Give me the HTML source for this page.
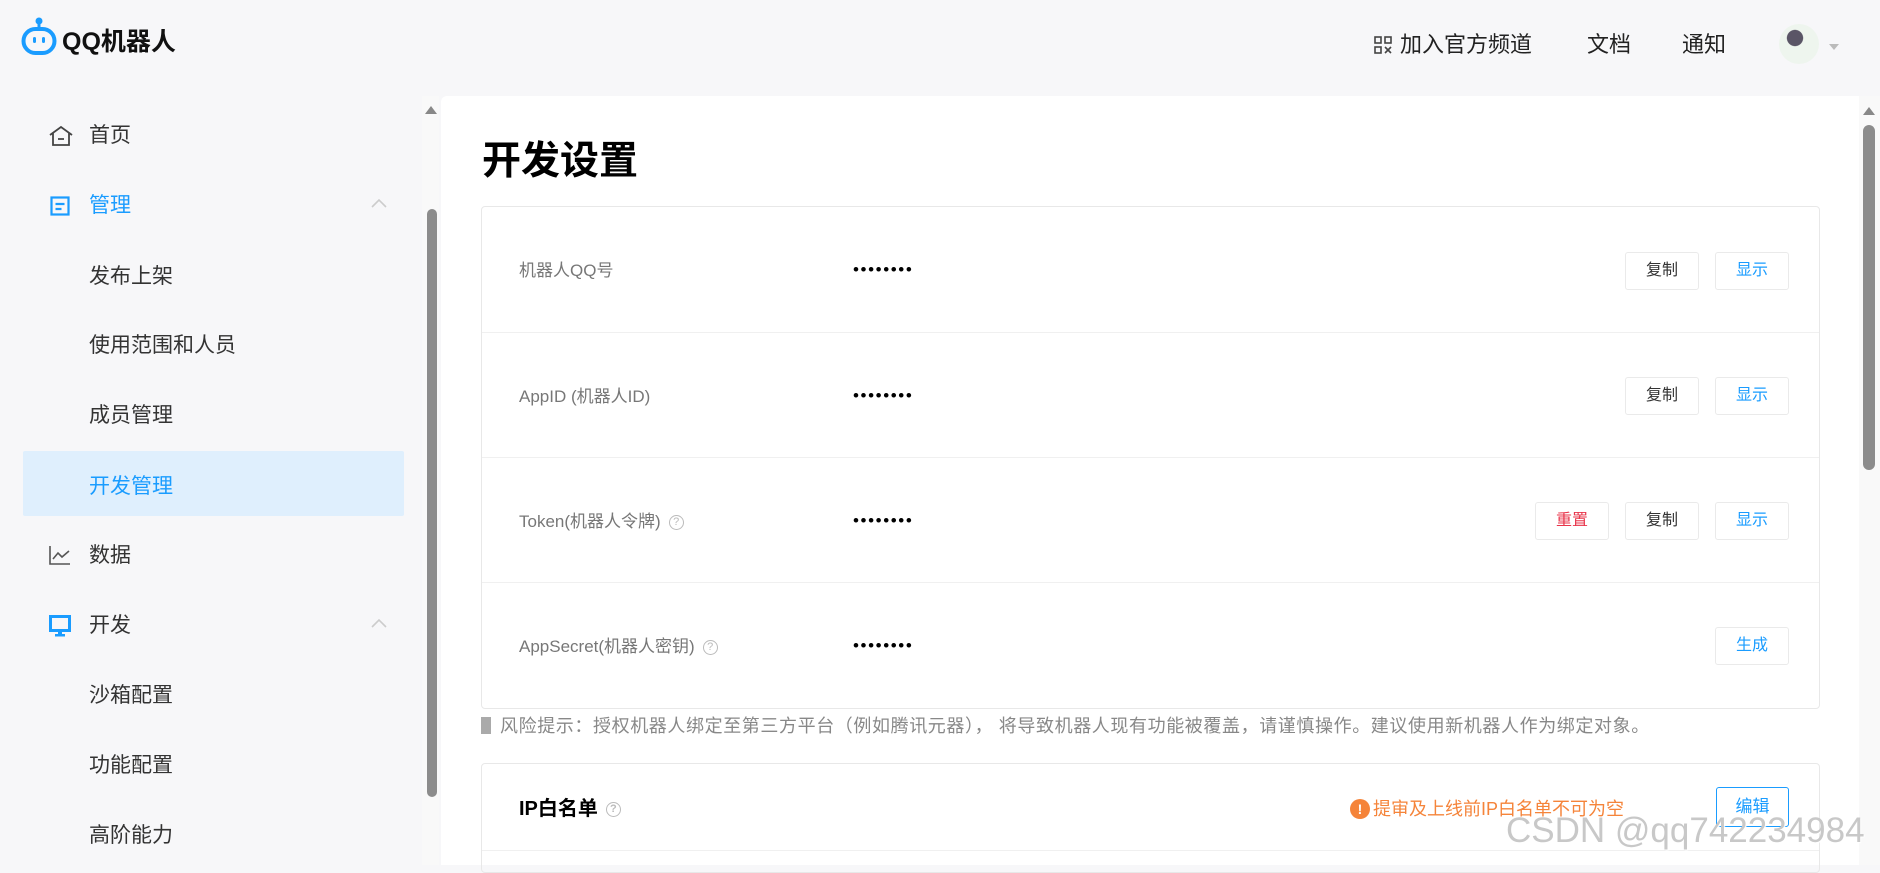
<!DOCTYPE html>
<html><head><meta charset="utf-8"><style>
*{box-sizing:border-box;margin:0;padding:0}
body{width:1880px;height:865px;overflow:hidden;background:#f7f7f9;font-family:"Liberation Sans","Noto Sans CJK SC",sans-serif;position:relative;color:#222}
.a{position:absolute;white-space:nowrap}
.nav{font-size:22px;color:#222;line-height:24px}
.mi{font-size:21px;color:#333;line-height:24px}
.lbl{font-size:17px;color:#777;line-height:20px}
.dots{font-size:17px;color:#000;letter-spacing:1.6px}
.btn{position:absolute;width:74px;height:38px;border:1px solid #eaeaea;border-radius:3px;background:#fff;font-size:16px;text-align:center;line-height:36px}
.q{display:inline-block;width:15px;height:15px;border:1px solid #bbb;border-radius:50%;font-size:11px;color:#bbb;text-align:center;line-height:13px;vertical-align:middle;margin-left:8px}
.sep{position:absolute;left:482px;width:1337px;height:1px;background:#f0f0f0}
</style></head><body>
<svg class="a" style="left:20px;top:16px" width="38" height="42" viewBox="0 0 38 42">
<circle cx="19" cy="5" r="3.5" fill="#1a9cff"/><rect x="17.5" y="6" width="3" height="6" fill="#1a9cff"/>
<rect x="3.5" y="13" width="31" height="24" rx="12" fill="none" stroke="#1a9cff" stroke-width="4"/>
<rect x="13" y="21" width="3" height="6" rx="1.5" fill="#1a9cff"/><rect x="22" y="21" width="3" height="6" rx="1.5" fill="#1a9cff"/>
</svg>
<div class="a" style="left:62px;top:27px;font-size:25px;font-weight:bold;color:#111;line-height:30px">QQ机器人</div>
<svg class="a" style="left:1374px;top:36px" width="18" height="18" viewBox="0 0 18 18" fill="none" stroke="#444" stroke-width="1.6"><rect x="1" y="1" width="6" height="6"/><rect x="11" y="1" width="6" height="6"/><rect x="1" y="11" width="6" height="6"/><path d="M11 11l6 6M17 11l-6 6"/></svg>
<div class="a nav" style="left:1400px;top:33px">加入官方频道</div>
<div class="a nav" style="left:1587px;top:33px">文档</div>
<div class="a nav" style="left:1682px;top:33px">通知</div>
<div class="a" style="left:1779px;top:24px;width:40px;height:40px;border-radius:50%;background:radial-gradient(circle at 40% 35%,#5a5566 0 22%,#eef5ee 24%)"></div>
<div class="a" style="left:1829px;top:44px;width:0;height:0;border-left:5px solid transparent;border-right:5px solid transparent;border-top:6px solid #bbb"></div>
<svg class="a" style="left:48px;top:125px" width="26" height="22" viewBox="0 0 26 22" fill="none" stroke="#444" stroke-width="1.8"><path d="M2 10L13 2l11 8M5 8v12h16V8M10 14h6"/></svg>
<div class="a mi" style="left:89px;top:124px">首页</div>
<svg class="a" style="left:50px;top:196px" width="20" height="20" viewBox="0 0 20 20" fill="none" stroke="#1a9cff" stroke-width="2.2"><rect x="1.5" y="1.5" width="17" height="17"/><path d="M5.5 8h9M5.5 13h6"/></svg>
<div class="a mi" style="left:89px;top:194px;color:#1a9cff">管理</div>
<svg class="a" style="left:371px;top:198px" width="16" height="10" viewBox="0 0 16 10" fill="none" stroke="#ccc" stroke-width="1.6"><path d="M1 9l7-7 7 7"/></svg>
<div class="a mi" style="left:89px;top:265px">发布上架</div>
<div class="a mi" style="left:89px;top:334px">使用范围和人员</div>
<div class="a mi" style="left:89px;top:404px">成员管理</div>
<div class="a" style="left:23px;top:451px;width:381px;height:65px;background:#dfeffd;border-radius:2px"></div>
<div class="a mi" style="left:89px;top:475px;color:#1a9cff">开发管理</div>
<svg class="a" style="left:49px;top:545px" width="22" height="20" viewBox="0 0 22 20" fill="none" stroke="#555" stroke-width="1.6"><path d="M1 1v18h20M4 14l5-6 4 4 7-6"/></svg>
<div class="a mi" style="left:89px;top:544px">数据</div>
<svg class="a" style="left:49px;top:615px" width="22" height="22" viewBox="0 0 22 22"><rect x="1.5" y="1.5" width="19" height="14" fill="none" stroke="#1a9cff" stroke-width="3"/><rect x="9" y="16" width="4" height="3" fill="#1a9cff"/><rect x="6" y="19" width="10" height="2.5" fill="#1a9cff"/></svg>
<div class="a mi" style="left:89px;top:614px">开发</div>
<svg class="a" style="left:371px;top:618px" width="16" height="10" viewBox="0 0 16 10" fill="none" stroke="#ccc" stroke-width="1.6"><path d="M1 9l7-7 7 7"/></svg>
<div class="a mi" style="left:89px;top:684px">沙箱配置</div>
<div class="a mi" style="left:89px;top:754px">功能配置</div>
<div class="a mi" style="left:89px;top:824px">高阶能力</div>
<div class="a" style="left:422px;top:96px;width:17px;height:769px;background:#f9f9f9"></div>
<div class="a" style="left:425px;top:106px;width:0;height:0;border-left:6px solid transparent;border-right:6px solid transparent;border-bottom:8px solid #888"></div>
<div class="a" style="left:427px;top:209px;width:10px;height:588px;background:#8c8c8c;border-radius:5px"></div>
<div class="a" style="left:441px;top:96px;width:1418px;height:769px;background:#fff;border-radius:6px 0 0 0"></div>
<div class="a" style="left:482px;top:139px;font-size:39px;font-weight:bold;color:#000;line-height:46px">开发设置</div>
<div class="a" style="left:481px;top:206px;width:1339px;height:503px;border:1px solid #e8e8e8;border-radius:4px"></div>
<div class="sep" style="top:332px"></div><div class="sep" style="top:457px"></div><div class="sep" style="top:582px"></div>
<div class="a lbl" style="left:519px;top:261px">机器人QQ号</div>
<div class="a lbl" style="left:519px;top:387px">AppID (机器人ID)</div>
<div class="a lbl" style="left:519px;top:512px">Token(机器人令牌)<span class="q">?</span></div>
<div class="a lbl" style="left:519px;top:637px">AppSecret(机器人密钥)<span class="q">?</span></div>
<div class="a dots" style="left:853px;top:260px">••••••••</div>
<div class="a dots" style="left:853px;top:386px">••••••••</div>
<div class="a dots" style="left:853px;top:511px">••••••••</div>
<div class="a dots" style="left:853px;top:636px">••••••••</div>
<div class="btn" style="left:1625px;top:252px;color:#333">复制</div><div class="btn" style="left:1715px;top:252px;color:#1a9cff">显示</div>
<div class="btn" style="left:1625px;top:377px;color:#333">复制</div><div class="btn" style="left:1715px;top:377px;color:#1a9cff">显示</div>
<div class="btn" style="left:1535px;top:502px;color:#e8344a">重置</div><div class="btn" style="left:1625px;top:502px;color:#333">复制</div><div class="btn" style="left:1715px;top:502px;color:#1a9cff">显示</div>
<div class="btn" style="left:1715px;top:627px;color:#1a9cff">生成</div>
<div class="a" style="left:481px;top:717px;width:10px;height:17px;background:#aaa"></div>
<div class="a" style="left:500px;top:715px;font-size:18px;color:#888;line-height:22px;letter-spacing:0.6px">风险提示：授权机器人绑定至第三方平台（例如腾讯元器）， 将导致机器人现有功能被覆盖，请谨慎操作。建议使用新机器人作为绑定对象。</div>
<div class="a" style="left:481px;top:763px;width:1339px;height:110px;border:1px solid #e8e8e8;border-radius:4px"></div>
<div class="sep" style="top:850px"></div>
<div class="a" style="left:519px;top:797px;font-size:20px;font-weight:bold;color:#000;line-height:24px">IP白名单<span class="q">?</span></div>
<div class="a" style="left:1350px;top:799px;width:20px;height:20px;border-radius:50%;background:#f5843a;color:#fff;font-size:14px;font-weight:bold;text-align:center;line-height:20px">!</div>
<div class="a" style="left:1373px;top:798px;font-size:18px;color:#f5843a;line-height:22px">提审及上线前IP白名单不可为空</div>
<div class="a" style="left:1716px;top:787px;width:73px;height:40px;border:1px solid #1a9cff;border-radius:3px;font-size:17px;color:#1a9cff;text-align:center;line-height:38px;background:#fff">编辑</div>
<div class="a" style="left:1859px;top:96px;width:21px;height:769px;background:#f9f9f9"></div>
<div class="a" style="left:1863px;top:107px;width:0;height:0;border-left:6px solid transparent;border-right:6px solid transparent;border-bottom:8px solid #888"></div>
<div class="a" style="left:1863px;top:125px;width:12px;height:345px;background:#8c8c8c;border-radius:6px"></div>
<div class="a" style="left:1506px;top:811px;font-size:35px;color:#c8c8c8;line-height:40px;text-shadow:1px 1px 1px #fff">CSDN @qq742234984</div>
</body></html>
